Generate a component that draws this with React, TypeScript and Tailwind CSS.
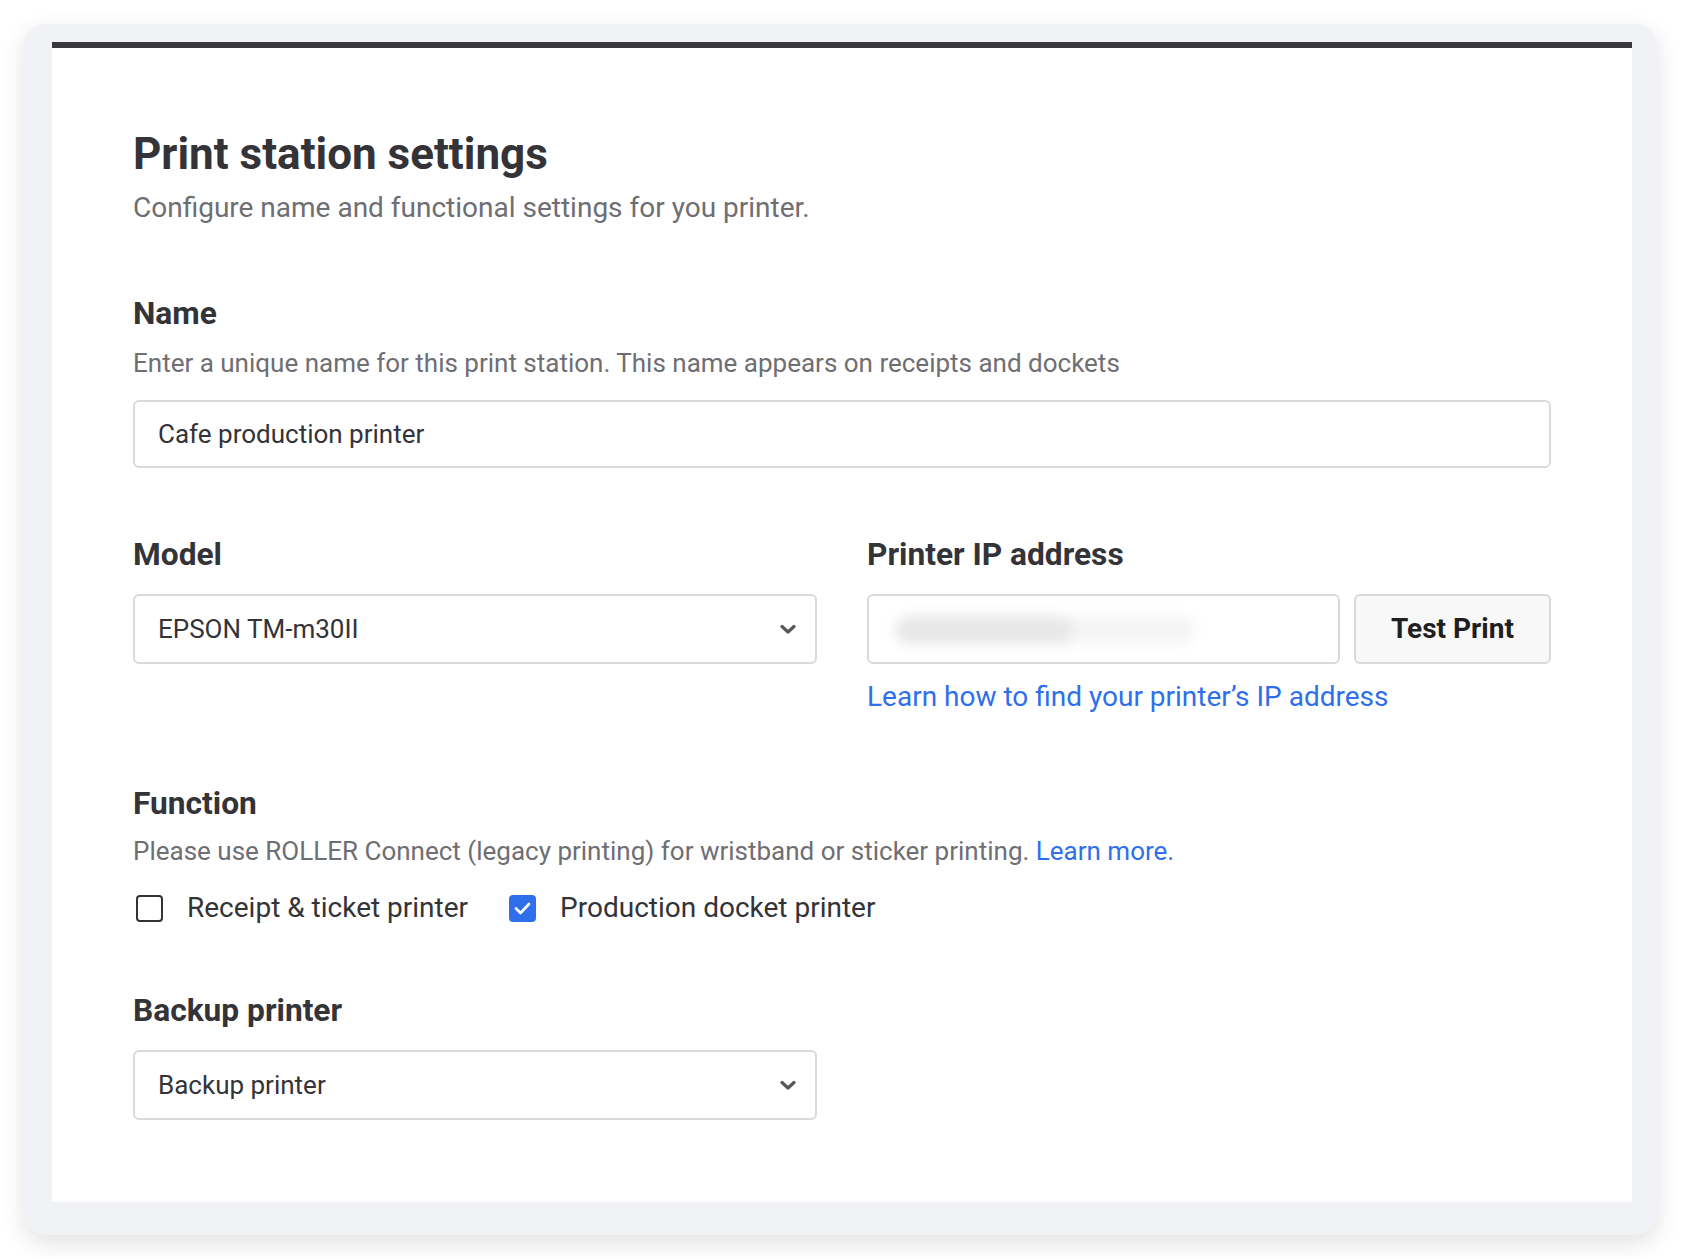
import React from 'react';

function Chevron() {
  return (
    <svg width="18" height="11" viewBox="0 0 18 11" className="shrink-0">
      <path d="M3 2.5 L9 8 L15 2.5" fill="none" stroke="#56565b" strokeWidth="3.2" strokeLinecap="round" strokeLinejoin="round" />
    </svg>
  );
}

function Select({ value }: { value: string }) {
  return (
    <div className="flex h-[70px] items-center justify-between rounded-[6px] border-2 border-[#dadada] bg-white pl-[23px] pr-[18px]">
      <span className="text-[26px] text-[#333338]">{value}</span>
      <Chevron />
    </div>
  );
}

function Checkbox({ checked }: { checked?: boolean }) {
  if (checked) {
    return (
      <span className="flex h-[27px] w-[27px] shrink-0 items-center justify-center rounded-[4px] bg-[#2f6fec]">
        <svg width="19" height="15" viewBox="0 0 19 15">
          <path d="M3 7.5 L7.5 12 L16 3" fill="none" stroke="white" strokeWidth="2.6" strokeLinecap="round" strokeLinejoin="round" />
        </svg>
      </span>
    );
  }
  return <span className="block h-[27px] w-[27px] shrink-0 rounded-[4px] border-[2.5px] border-[#333338]" />;
}

export default function App() {
  return (
    <div className="min-h-screen bg-white px-[24px] pt-[24px] pb-[24px] font-['Roboto','Liberation_Sans',sans-serif]">
      {/* outer frame */}
      <div className="rounded-[22px] bg-[#f1f2f6] pl-[28px] pr-[25px] pt-[18px] pb-[33px] shadow-[0_8px_24px_rgba(0,0,0,0.12)]">
        <div className="border-t-[6px] border-[#38383d] bg-white px-[81px] pt-[80px] pb-[82px]">
          <h1 className="text-[44px] font-bold leading-[52px] text-[#333338]">Print station settings</h1>
          <p className="mt-[12px] text-[28px] leading-[32px] text-[#6e6e73]">
            Configure name and functional settings for you printer.
          </p>

          {/* Name */}
          <h2 className="mt-[72px] text-[31.7px] font-bold leading-[36px] text-[#333338]">Name</h2>
          <p className="mt-[15px] text-[26px] leading-[32px] text-[#6e6e73]">
            Enter a unique name for this print station. This name appears on receipts and dockets
          </p>
          <div className="mt-[21px] flex h-[68px] items-center rounded-[6px] border-2 border-[#dadada] bg-white pl-[23px]">
            <span className="text-[26px] text-[#333338]">Cafe production printer</span>
          </div>

          {/* Model + IP */}
          <div className="mt-[69px] grid grid-cols-2 gap-[50px]">
            <div>
              <h2 className="text-[31.7px] font-bold leading-[36px] text-[#333338]">Model</h2>
              <div className="mt-[21px]">
                <Select value="EPSON TM-m30II" />
              </div>
            </div>
            <div>
              <h2 className="text-[31.7px] font-bold leading-[36px] text-[#333338]">Printer IP address</h2>
              <div className="mt-[21px] flex gap-[14px]">
                <div className="relative flex h-[70px] flex-1 items-center overflow-hidden rounded-[6px] border-2 border-[#dadada] bg-white">
                  <div className="absolute left-[26px] top-[20px] h-[28px] w-[300px] rounded-full bg-[#f5f5f5] blur-[6px]" />
                  <div className="absolute left-[28px] top-[22px] h-[24px] w-[175px] rounded-full bg-[#e7e7e7] blur-[6px]" />
                </div>
                <button className="h-[70px] w-[197px] rounded-[6px] border-2 border-[#dadada] bg-[#f8f8f8] text-[28px] font-bold text-[#1f1f22]">
                  Test Print
                </button>
              </div>
              <a className="mt-[17px] block text-[28px] leading-[32px] text-[#2f6fec]">
                Learn how to find your printer’s IP address
              </a>
            </div>
          </div>

          {/* Function */}
          <h2 className="mt-[73px] text-[31.7px] font-bold leading-[36px] text-[#333338]">Function</h2>
          <p className="mt-[13px] text-[26px] leading-[32px] text-[#6e6e73]">
            Please use ROLLER Connect (legacy printing) for wristband or sticker printing.{' '}
            <span className="text-[#2f6fec]">Learn more.</span>
          </p>
          <div className="mt-[25px] flex items-center">
            <span className="ml-[3px]"><Checkbox /></span>
            <span className="ml-[24px] text-[28px] leading-[32px] text-[#333338]">Receipt &amp; ticket printer</span>
            <span className="ml-[41px]"><Checkbox checked /></span>
            <span className="ml-[24px] text-[28px] leading-[32px] text-[#333338]">Production docket printer</span>
          </div>

          {/* Backup printer */}
          <h2 className="mt-[69px] text-[31.7px] font-bold leading-[36px] text-[#333338]">Backup printer</h2>
          <div className="mt-[21px] w-[684px]">
            <Select value="Backup printer" />
          </div>
        </div>
      </div>
    </div>
  );
}
